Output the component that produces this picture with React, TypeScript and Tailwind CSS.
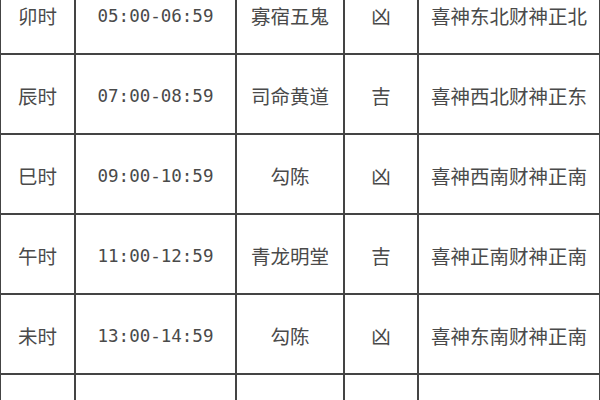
const rows = [
  { zhi: "卯时", time: "05:00-06:59", star: "寡宿五鬼", luck: "凶", dir: "喜神东北财神正北" },
  { zhi: "辰时", time: "07:00-08:59", star: "司命黄道", luck: "吉", dir: "喜神西北财神正东" },
  { zhi: "巳时", time: "09:00-10:59", star: "勾陈", luck: "凶", dir: "喜神西南财神正南" },
  { zhi: "午时", time: "11:00-12:59", star: "青龙明堂", luck: "吉", dir: "喜神正南财神正南" },
  { zhi: "未时", time: "13:00-14:59", star: "勾陈", luck: "凶", dir: "喜神东南财神正南" },
  // next row starts at the bottom edge, its text is out of view
  { zhi: "", time: "", star: "", luck: "", dir: "" },
];

const cjk = "font-['Noto_Sans_CJK_SC',sans-serif] text-[19.5px]";

export default function App() {
  return (
    <div className="w-[600px] h-[400px] overflow-hidden bg-white">
      <div className="-mt-[25px] border-l border-r border-[#444] text-[#4a4a4a]">
        {rows.map((r, i) => (
          <div
            key={i}
            className="grid grid-cols-[75px_161px_108px_74px_1fr] h-[80px] border-b-2 border-[#444]"
          >
            <div className={`flex items-center justify-center pt-[4px] border-r-2 border-[#444] ${cjk}`}>
              {r.zhi}
            </div>
            <div className="flex items-center justify-center pt-[4px] border-r-2 border-[#444] font-['DejaVu_Sans_Mono',monospace] text-[17.5px]">
              {r.time}
            </div>
            <div className={`flex items-center justify-center pt-[4px] border-r-2 border-[#444] ${cjk}`}>
              {r.star}
            </div>
            <div className={`flex items-center justify-center pt-[4px] border-r-2 border-[#444] ${cjk}`}>
              {r.luck}
            </div>
            <div className={`flex items-center justify-center pt-[4px] ${cjk}`}>{r.dir}</div>
          </div>
        ))}
      </div>
    </div>
  );
}
